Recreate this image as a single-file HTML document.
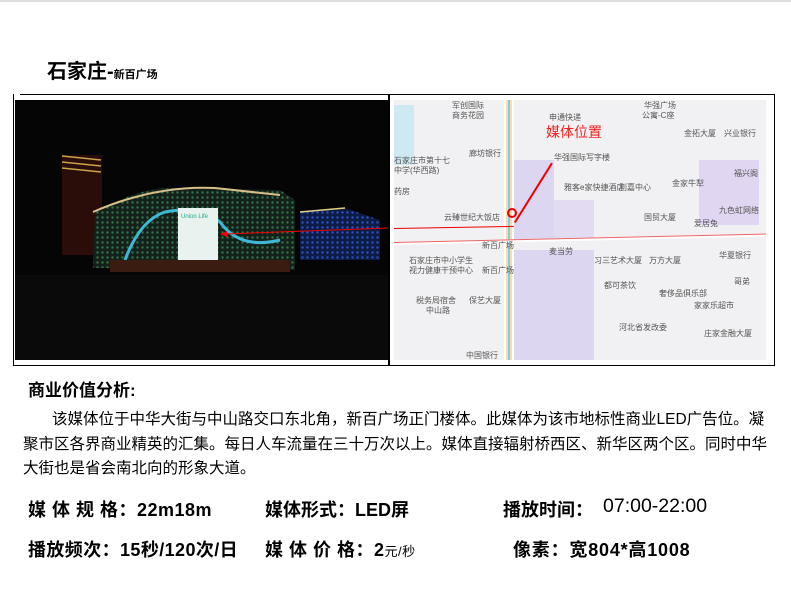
<!DOCTYPE html>
<html><head><meta charset="utf-8"><style>
*{margin:0;padding:0;box-sizing:border-box}
body{width:791px;height:596px;background:#fff;position:relative;overflow:hidden;font-family:"Liberation Sans","Noto Sans CJK SC",sans-serif;color:#000}
.a{position:absolute;white-space:nowrap}
.b{font-weight:bold}
.map span{position:absolute;font-size:8px;color:#555;white-space:nowrap}
</style></head><body>
<div class="a" style="left:0;top:0;width:791px;height:2px;background:#ddd"></div>
<div class="a b" style="left:47px;top:55px;font-size:20px">石家庄-<span style="font-size:11px">新百广场</span></div>
<div class="a" style="left:20px;top:94px;width:755px;height:1px;background:#000"></div>
<div class="a" style="left:13px;top:94px;width:1px;height:272px;background:#000"></div>
<div class="a" style="left:13px;top:365px;width:762px;height:1px;background:#000"></div>
<div class="a" style="left:774px;top:94px;width:1px;height:272px;background:#000"></div>
<div class="a" style="left:388px;top:94px;width:2px;height:272px;background:#000"></div>
<!-- photo -->
<svg class="a" style="left:15px;top:100px" width="373" height="260" viewBox="0 0 373 260">
<defs><pattern id="d" width="5" height="5" patternUnits="userSpaceOnUse"><circle cx="2.5" cy="2.5" r="1.2" fill="#3c8a5a"/></pattern>
<pattern id="e" width="5" height="5" patternUnits="userSpaceOnUse"><circle cx="2.5" cy="2.5" r="1.2" fill="#3050c0"/></pattern></defs>
<rect width="373" height="260" fill="#050505"/>
<rect x="47" y="55" width="40" height="100" fill="#2a0d08"/>
<g stroke="#c9a24a" stroke-width="1.5"><line x1="47" y1="56" x2="86" y2="60"/><line x1="47" y1="62" x2="86" y2="66"/><line x1="47" y1="68" x2="86" y2="72"/></g>
<path d="M78 168 L80 112 Q120 90 150 88 L265 90 L280 100 L280 170 Z" fill="#14201a"/>
<path d="M78 168 L80 112 Q120 90 150 88 L265 90 L280 100 L280 170 Z" fill="url(#d)" opacity="0.8"/>
<path d="M78 112 Q140 85 200 88 L265 95" stroke="#d8c08a" stroke-width="2" fill="none"/>
<path d="M110 160 Q125 120 150 112 Q185 105 205 122 Q225 150 265 140" stroke="#3fb8d8" stroke-width="3" fill="none"/>
<rect x="163" y="108" width="40" height="52" fill="#e8f2ee"/>
<text x="166" y="118" font-size="6" fill="#2a8">Union Life</text>
<path d="M285 112 L330 108 L365 120 L365 160 L285 160 Z" fill="#0c1c45"/>
<path d="M285 112 L330 108 L365 120 L365 160 L285 160 Z" fill="url(#e)"/>
<line x1="285" y1="112" x2="330" y2="108" stroke="#e0d080" stroke-width="1.5"/>
<rect x="95" y="160" width="180" height="12" fill="#3a1c10"/>
<rect x="0" y="175" width="373" height="85" fill="#0a0a0a"/>
<line x1="210" y1="134" x2="373" y2="128" stroke="#e00" stroke-width="1"/>
<path d="M205 134 L212 131 L212 137Z" fill="#e00"/>
</svg>
<!-- map -->
<div class="a map" style="left:394px;top:100px;width:372px;height:260px;background:#f1f1f3;overflow:hidden">
<div class="a" style="left:0;top:5px;width:20px;height:60px;background:#cfe9f2"></div>
<div class="a" style="left:110px;top:0;width:10px;height:260px;background:#f6dfa6;border-left:2px solid #fff;border-right:2px solid #fff"></div>
<div class="a" style="left:114px;top:0;width:2px;height:260px;background:#8bc6ea"></div>
<div class="a" style="left:120px;top:60px;width:40px;height:80px;background:#dcd6f0"></div>
<div class="a" style="left:160px;top:100px;width:40px;height:40px;background:#e3dbf2"></div>
<div class="a" style="left:120px;top:150px;width:80px;height:110px;background:#dcd6f0"></div>
<div class="a" style="left:305px;top:60px;width:60px;height:65px;background:#e0d6f2"></div>
<div class="a" style="left:0;top:142px;width:372px;height:3px;background:#fff;border-top:1px solid #e66;transform:rotate(-1.3deg);transform-origin:0 0"></div>
<div class="a" style="left:0;top:128px;width:120px;height:1px;background:#e00;transform:rotate(-1deg);transform-origin:0 0"></div>
<div class="a" style="left:120px;top:122px;width:70px;height:2px;background:#e00;transform:rotate(-58deg);transform-origin:0 0"></div>
<div class="a" style="left:113px;top:108px;width:10px;height:10px;border:2px solid #e00;border-radius:50%"></div>
<span style="left:152px;top:22px;font-size:14px;color:#e22">媒体位置</span>
<span style="left:58px;top:0">军创国际</span><span style="left:58px;top:10px">商务花园</span>
<span style="left:155px;top:12px">申通快递</span><span style="left:250px;top:0">华强广场</span><span style="left:248px;top:10px">公寓-C座</span>
<span style="left:290px;top:28px">金拓大厦</span><span style="left:330px;top:28px">兴业银行</span>
<span style="left:75px;top:48px">廊坊银行</span><span style="left:160px;top:52px">华强国际写字楼</span>
<span style="left:0;top:55px">石家庄市第十七</span><span style="left:0;top:65px">中学(华西路)</span>
<span style="left:170px;top:82px">雅客e家快捷酒店</span><span style="left:225px;top:82px">利嘉中心</span><span style="left:278px;top:78px">金家牛犁</span><span style="left:340px;top:68px">福兴阁</span>
<span style="left:0;top:86px">药房</span><span style="left:50px;top:112px">云臻世纪大饭店</span><span style="left:250px;top:112px">国贸大厦</span><span style="left:300px;top:118px">爱居兔</span><span style="left:325px;top:105px">九色虹网络</span>
<span style="left:88px;top:140px">新百广场</span><span style="left:88px;top:165px">新百广场</span>
<span style="left:15px;top:155px">石家庄市中小学生</span><span style="left:15px;top:165px">视力健康干预中心</span>
<span style="left:155px;top:146px">麦当劳</span><span style="left:200px;top:155px">习三艺术大厦</span><span style="left:255px;top:155px">万方大厦</span><span style="left:325px;top:150px">华夏银行</span>
<span style="left:210px;top:180px">都可茶饮</span><span style="left:265px;top:188px">奢侈品俱乐部</span><span style="left:340px;top:176px">哥弟</span>
<span style="left:22px;top:195px">税务局宿舍</span><span style="left:32px;top:205px">中山路</span><span style="left:75px;top:195px">保艺大厦</span>
<span style="left:300px;top:200px">家家乐超市</span><span style="left:225px;top:222px">河北省发改委</span><span style="left:310px;top:228px">庄家金融大厦</span><span style="left:72px;top:250px">中国银行</span>
</div>
<div class="a b" style="left:28px;top:376px;font-size:17px">商业价值分析:</div>
<div class="a" style="left:23px;top:408px;width:750px;font-size:15.5px;line-height:24.5px;white-space:normal;text-indent:29px">该媒体位于中华大街与中山路交口东北角，新百广场正门楼体。此媒体为该市地标性商业LED广告位。凝聚市区各界商业精英的汇集。每日人车流量在三十万次以上。媒体直接辐射桥西区、新华区两个区。同时中华大街也是省会南北向的形象大道。</div>
<div class="a b" style="left:28px;top:496px;font-size:18px;letter-spacing:0.5px">媒 体 规 格：22m18m</div>
<div class="a b" style="left:265px;top:496px;font-size:18px">媒体形式：LED屏</div>
<div class="a b" style="left:503px;top:496px;font-size:18px">播放时间：</div>
<div class="a" style="left:603px;top:495px;font-size:19.5px">07:00-22:00</div>
<div class="a b" style="left:28px;top:536px;font-size:18px;letter-spacing:0.4px">播放频次：15秒/120次/日</div>
<div class="a b" style="left:265px;top:536px;font-size:18px;letter-spacing:0.5px">媒 体 价 格：2<span style="font-size:13px;font-weight:normal">元/秒</span></div>
<div class="a b" style="left:513px;top:536px;font-size:18px;letter-spacing:0.8px">像素：宽804*高1008</div>
</body></html>
